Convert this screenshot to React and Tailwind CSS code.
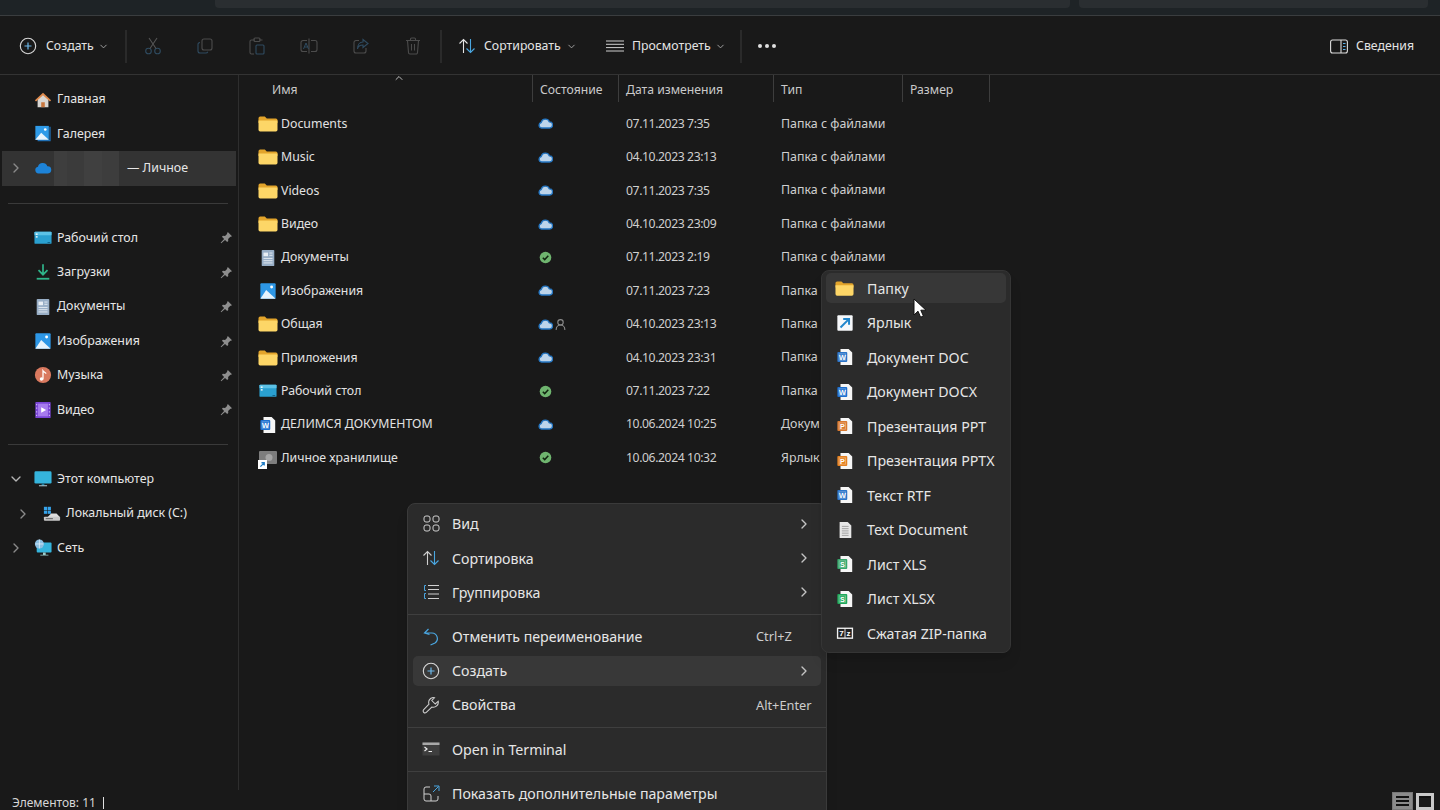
import React from 'react';
import { ChevronDown, ChevronRight, ChevronUp, UserRound } from 'lucide-react';

// --- цветные значки проводника ---
const Svg = ({ size = 18, className = '', children }) => (
  <svg width={size} height={size} viewBox="0 0 20 20" fill="none" className={`shrink-0 ${className}`}>{children}</svg>
);

const Folder = ({ size = 20 }) => (
  <Svg size={size}>
    <path d="M0.5 4.2A1.7 1.7 0 0 1 2.2 2.5h4.6l2 2h9a1.7 1.7 0 0 1 1.7 1.7V9H0.5z" fill="#e2a42b" />
    <path d="M0.5 6.6h19v9.2a1.7 1.7 0 0 1-1.7 1.7H2.2a1.7 1.7 0 0 1-1.7-1.7z" fill="#fdd667" />
  </Svg>
);
const HomeIcon = () => (
  <Svg>
    <path d="M4 9.5 10 4l6 5.5V18H4z" fill="#d9d6d2" />
    <path d="M8 12.5h4V18H8z" fill="#c8763e" />
    <path d="M1 10.4 10 2l9 8.4-1.3 1.3L10 4.7 2.3 11.7z" fill="#e08a4c" />
  </Svg>
);
const GalleryIcon = () => (
  <Svg>
    <path d="M17 2h1.5v16H4v-1.200h13z" fill="#1f6fb5" />
    <rect x="1.500" y="1" width="15" height="15.500" fill="#2f9be8" />
    <circle cx="12.500" cy="5" r="1.500" fill="#fff" />
    <path d="M1.500 16.500 8 8.500l8.500 8z" fill="#e9f4fc" />
  </Svg>
);
const PictureIcon = ({ size = 18 }) => (
  <Svg size={size}>
    <rect x="1.500" y="1.500" width="17" height="17" rx="1" fill="#2d97e6" />
    <circle cx="14" cy="5.500" r="1.600" fill="#fff" />
    <path d="M1.500 18.500 8 9l10.500 9.500z" fill="#e6f3fc" />
  </Svg>
);
const OneDriveIcon = () => (
  <Svg>
    <path d="M5 16a3.800 3.800 0 0 1-.6-7.500A5.500 5.500 0 0 1 14.800 8a4 4 0 0 1 .7 8z" fill="#1d83d8" />
  </Svg>
);
const DesktopIcon = ({ size = 18 }) => (
  <Svg size={size}>
    <rect x="0.500" y="3" width="19" height="13.500" rx="1" fill="#2aa0d0" />
    <rect x="0.500" y="3" width="19" height="4" rx="1" fill="#5cc2e6" />
    <rect x="2" y="5" width="2" height="1.500" fill="#fff" />
    <rect x="2" y="8" width="2" height="1.500" fill="#fff" />
    <rect x="15" y="14.500" width="3" height="1" fill="#0f5f85" />
  </Svg>
);
const DownloadIcon = () => (
  <Svg>
    <path d="M10 1.500v11M5 8l5 5 5-5" stroke="#2fb48a" strokeWidth="1.900" />
    <path d="M3 17.500h14" stroke="#2fb48a" strokeWidth="2" />
  </Svg>
);
const DocsIcon = ({ size = 18 }) => (
  <Svg size={size}>
    <rect x="3" y="1" width="14" height="18" rx="1" fill="#98aec6" />
    <rect x="5" y="4" width="5" height="4" fill="#e8eef4" />
    <path d="M11.500 4.500h3.500M11.500 7h3.500M5 10.500h10M5 13h10M5 15.500h10" stroke="#e8eef4" />
  </Svg>
);
const MusicIcon = () => (
  <Svg>
    <circle cx="10" cy="10" r="9" fill="#d9795f" />
    <path d="M10 15V5.500c1 1.500 2.500 1.500 3.500 3" stroke="#fff" strokeWidth="1.400" />
    <circle cx="8.300" cy="14.500" r="1.900" fill="#fff" />
  </Svg>
);
const VideoIcon = () => (
  <Svg>
    <rect x="1.500" y="1" width="17" height="18" rx="1" fill="#7a45d6" />
    <rect x="4.500" y="3" width="11" height="14" fill="#a77bee" />
    <path d="M2.500 4h1M2.500 8h1M2.500 12h1M2.500 16h1M16.500 4h1M16.500 8h1M16.500 12h1M16.500 16h1" stroke="#e4d6fb" strokeWidth="1.400" />
    <path d="M8 7l5.500 3L8 13z" fill="#fff" />
  </Svg>
);
const PcIcon = () => (
  <Svg>
    <rect x="0.500" y="1.500" width="19" height="13.500" rx="1.500" fill="#35b4dc" />
    <path d="M8.500 15h3v2.500h-3z" fill="#1d7d9e" />
    <path d="M5.500 17.500h9" stroke="#a9c3cd" strokeWidth="1.200" />
  </Svg>
);
const DriveIcon = () => (
  <Svg>
    <rect x="1" y="2" width="3.600" height="3.600" fill="#36a3ea" />
    <rect x="5.200" y="2" width="3.600" height="3.600" fill="#36a3ea" />
    <rect x="1" y="6.200" width="3.600" height="3.600" fill="#36a3ea" />
    <rect x="5.200" y="6.200" width="3.600" height="3.600" fill="#36a3ea" />
    <path d="M9 9.500h6l4 4H5z" fill="#dedede" />
    <rect x="1" y="13" width="18" height="4.500" rx="1" fill="#c9c9c9" />
    <path d="M3 15.200h8" stroke="#555" />
  </Svg>
);
const NetworkIcon = () => (
  <Svg>
    <rect x="3" y="4" width="16.500" height="11" rx="1" fill="#35b4dc" />
    <path d="M10 15h3v2.500h-3zM7 17.500h9v.8H7z" fill="#9cc" />
    <circle cx="6" cy="5.500" r="5" fill="#8bbfe2" />
    <path d="M1.500 5.500h9M6 .5v10" stroke="#e6f3fb" strokeWidth=".8" />
  </Svg>
);
const PinIcon = () => (
  <Svg size={13}>
    <path d="M12 1.500 18.500 8l-2 1-1 .2-3 3 .2 3.300-1.700 1.500-3.300-3.300L2 19l-1-1 5.300-5.700L3 9l1.500-1.700 3.300.2 3-3 .2-1z" fill="#8d8d8d" />
  </Svg>
);
const OfficeDoc = ({ color, letter, size = 18 }) => (
  <Svg size={size}>
    <path d="M5 1h9l4 4v14H5z" fill="#f6f6f6" />
    <rect x="1.500" y="4.500" width="11" height="11" rx="1" fill={color} />
    <rect x="3.500" y="6.500" width="7" height="7" fill="none" stroke="#fff" strokeOpacity=".35" />
    <text x="7" y="13" textAnchor="middle" fontSize="8" fontWeight="700" fill="#fff" fontFamily="Liberation Sans, sans-serif">{letter}</text>
  </Svg>
);
const ShortcutBox = () => (
  <Svg>
    <rect x="1.500" y="1.500" width="17" height="17" rx="1" fill="#f6f8fa" />
    <path d="M5 15 14 6M8 5.500h6.500V12" stroke="#2186cc" strokeWidth="2.200" />
  </Svg>
);
const TextDocIcon = () => (
  <Svg>
    <path d="M4 1h9l4 4v14H4z" fill="#e6e6e6" />
    <path d="M6.500 6h7.500M6.500 8.500h7.500M6.500 11h7.500M6.500 13.500h7.500M6.500 16h7.500" stroke="#9a9a9a" />
  </Svg>
);
const ZipIcon = () => (
  <Svg>
    <rect x="1" y="4" width="18" height="12.500" fill="#f2f2f2" />
    <rect x="2.500" y="5.500" width="7" height="9.500" fill="#222" />
    <rect x="10.500" y="5.500" width="7" height="9.500" fill="#222" />
    <text x="6" y="13.500" textAnchor="middle" fontSize="9" fontWeight="700" fill="#fff" fontFamily="Liberation Sans, sans-serif">7</text>
    <text x="14" y="13.500" textAnchor="middle" fontSize="9" fontWeight="700" fill="#fff" fontFamily="Liberation Sans, sans-serif">z</text>
  </Svg>
);
const VaultIcon = () => (
  <div className="relative w-[20px] h-[20px] shrink-0">
    <Svg size={20}>
      <rect x="1" y="3" width="18" height="13" rx="1" fill="#7d7d7d" />
      <circle cx="11" cy="9.500" r="3.500" fill="#a5a5a5" />
    </Svg>
    <div className="absolute left-0 bottom-[-1px] w-[9px] h-[9px] bg-white flex items-center justify-center">
      <svg width="7" height="7" viewBox="0 0 10 10" fill="none"><path d="M2 8 7 3M3.500 2.500H7.500V6.500" stroke="#1f7cc4" strokeWidth="1.800" /></svg>
    </div>
  </div>
);

// --- статусы синхронизации ---
const CloudStatus = () => (
  <svg width="15" height="11" viewBox="0 0 15 11" fill="none" className="shrink-0">
    <path d="M3.600 10a2.800 2.800 0 0 1-.4-5.500 4.300 4.300 0 0 1 8.200-.6 2.900 2.900 0 0 1 .2 6.100z" fill="#bcd4ea" stroke="#2576c2" strokeWidth="1.300" />
  </svg>
);
const SyncedStatus = () => (
  <svg width="13" height="13" viewBox="0 0 13 13" fill="none" className="shrink-0 ml-[1px]">
    <circle cx="6.500" cy="6.500" r="5.800" fill="#6fb56f" />
    <path d="M3.800 6.700 5.700 8.600 9.300 4.800" stroke="#10240f" strokeWidth="1.500" />
  </svg>
);

// --- значки панели команд ---
const PlusCircle = ({ size = 18 }) => (
  <svg width={size} height={size} viewBox="0 0 18 18" fill="none" className="shrink-0">
    <circle cx="9" cy="9" r="7.700" stroke="#d8d8d8" strokeWidth="1.100" />
    <path d="M9 5.500v7M5.500 9h7" stroke="#6db8ea" strokeWidth="1.200" />
  </svg>
);
const SortArrows = ({ dim = false }) => (
  <svg width="18" height="16" viewBox="0 0 18 16" fill="none" className="shrink-0">
    <path d="M5.500 15V1.500M1.500 5.500l4-4 4 4" stroke={dim ? '#cfcfcf' : '#e4e4e4'} strokeWidth="1.100" />
    <path d="M12.500 1v13.500M8.500 10.500l4 4 4-4" stroke="#4aa6e0" strokeWidth="1.100" />
  </svg>
);
const Scissors = () => (
  <svg width="16" height="18" viewBox="0 0 16 18" fill="none">
    <circle cx="3.500" cy="14" r="2.800" stroke="#2f4b60" strokeWidth="1.100" />
    <circle cx="12.500" cy="14" r="2.800" stroke="#2f4b60" strokeWidth="1.100" />
    <path d="M5 11.500 12 1M11 11.500 4 1" stroke="#555" strokeWidth="1.100" />
  </svg>
);
const CopyIcon = () => (
  <svg width="16" height="16" viewBox="0 0 16 16" fill="none">
    <rect x="5" y="1" width="10" height="11" rx="2" stroke="#4c4c4c" strokeWidth="1.100" />
    <path d="M3 4.500A2 2 0 0 0 1 6.500V13a2 2 0 0 0 2 2h6a2 2 0 0 0 1.800-1.200" stroke="#2f4b60" strokeWidth="1.100" />
  </svg>
);
const PasteIcon = () => (
  <svg width="16" height="18" viewBox="0 0 16 18" fill="none">
    <path d="M6 3H2.500A1.500 1.500 0 0 0 1 4.500v11A1.500 1.500 0 0 0 2.500 17H5M10 3h3.500" stroke="#4c4c4c" strokeWidth="1.100" />
    <rect x="5" y="1" width="6" height="3.500" rx="1" stroke="#4c4c4c" strokeWidth="1.100" />
    <rect x="7" y="8" width="8" height="9" rx="1" stroke="#2f4b60" strokeWidth="1.100" />
  </svg>
);
const RenameIcon = () => (
  <svg width="18" height="16" viewBox="0 0 18 16" fill="none">
    <path d="M7 2.500H3A2 2 0 0 0 1 4.500v7a2 2 0 0 0 2 2h4M11 2.500h4a2 2 0 0 1 2 2v7a2 2 0 0 1-2 2h-4M9 .5v15" stroke="#4c4c4c" strokeWidth="1.100" />
    <path d="M3.500 11 6 5l2.500 6M4.500 9h3" stroke="#2f4b60" strokeWidth="1" />
  </svg>
);
const ShareIcon = () => (
  <svg width="16" height="16" viewBox="0 0 16 16" fill="none">
    <path d="M6 2.500H3A2 2 0 0 0 1 4.500V13a2 2 0 0 0 2 2h8a2 2 0 0 0 2-2v-3" stroke="#4c4c4c" strokeWidth="1.100" />
    <path d="M10 1.500 15 5.500 10 9.500V7C7 7 5 8.500 4.500 11 4.500 7 6.500 4 10 4z" stroke="#2f4b60" strokeWidth="1.100" />
  </svg>
);
const TrashIcon = () => (
  <svg width="16" height="18" viewBox="0 0 16 18" fill="none">
    <path d="M1 3.500h14M5.500 3.500V2a1 1 0 0 1 1-1h3a1 1 0 0 1 1 1v1.500M2.500 3.500 3.500 15.500a1.500 1.500 0 0 0 1.500 1.500h6a1.500 1.500 0 0 0 1.500-1.500l1-12M6.500 7v6.500M9.500 7v6.500" stroke="#4c4c4c" strokeWidth="1.100" />
  </svg>
);
const ViewLines = () => (
  <svg width="18" height="12" viewBox="0 0 18 12" fill="none">
    <path d="M0 1h18M0 4.300h18M0 7.600h18M0 11h18" stroke="#cfcfcf" />
  </svg>
);
const DetailsIcon = () => (
  <svg width="18" height="15" viewBox="0 0 18 15" fill="none">
    <rect x=".6" y="1" width="16.800" height="13" rx="2" stroke="#dcdcdc" strokeWidth="1.100" />
    <path d="M11 1v13" stroke="#dcdcdc" strokeWidth="1.100" />
    <path d="M13 4.500h2.500M13 7.500h2.500M13 10.500h2.500" stroke="#5cb0e6" strokeWidth="1.100" />
  </svg>
);

// --- значки контекстного меню ---
const GridIcon = () => (
  <svg width="17" height="17" viewBox="0 0 17 17" fill="none">
    <rect x="1" y="1" width="6" height="6" rx="2" stroke="#cfcfcf" />
    <rect x="10" y="1" width="6" height="6" rx="2" stroke="#cfcfcf" />
    <rect x="1" y="10" width="6" height="6" rx="2" stroke="#cfcfcf" />
    <rect x="10" y="10" width="6" height="6" rx="2" stroke="#cfcfcf" />
  </svg>
);
const GroupIcon = () => (
  <svg width="16" height="16" viewBox="0 0 16 16" fill="none">
    <path d="M3 1.500H1.500v5H3M3 9.500H1.500v5H3" stroke="#4aa6e0" />
    <path d="M5 1.500h11M5 5.500h11M5 10h11M5 14.500h11" stroke="#d0d0d0" />
  </svg>
);
const UndoIcon = () => (
  <svg width="16" height="18" viewBox="0 0 16 18" fill="none">
    <path d="M5.500 1 1.500 5l5 1.500M1.500 5h7.500a5.500 5.500 0 0 1 3 10L7.500 17" stroke="#4aa6e0" strokeWidth="1.200" />
  </svg>
);
const WrenchIcon = () => (
  <svg width="18" height="18" viewBox="0 0 18 18" fill="none">
    <path d="M11 1.500a5 5 0 0 1 1.500.2L9.800 4.500l3.500 3.500 2.900-2.800A5 5 0 0 1 9.800 11L4.300 16.300a1.700 1.700 0 0 1-2.600-2.600L7 8.200A5 5 0 0 1 11 1.500z" stroke="#d0d0d0" strokeWidth="1.050" />
  </svg>
);
const TerminalIcon = () => (
  <svg width="18" height="14" viewBox="0 0 18 14" fill="none">
    <rect x="0.500" y="0.500" width="17" height="13" fill="#3e3e3e" />
    <rect x="0.500" y="0.500" width="17" height="2.500" fill="#a8a8a8" />
    <path d="M2.500 5 5 7 2.500 9M6.500 9.500h3.500" stroke="#eee" strokeWidth="1.200" />
  </svg>
);
const MoreParamsIcon = () => (
  <svg width="17" height="17" viewBox="0 0 17 17" fill="none">
    <path d="M7 2H3a2 2 0 0 0-2 2v10a2 2 0 0 0 2 2h10a2 2 0 0 0 2-2v-3M1 9h5a2 2 0 0 1 2 2v5" stroke="#d0d0d0" />
    <path d="M10 7l5.500-5.500M11 1h5v5" stroke="#4aa6e0" />
  </svg>
);

const sidebarGroups = [
  [
    { label: 'Главная', icon: <HomeIcon /> },
    { label: 'Галерея', icon: <GalleryIcon /> },
    { label: '— Личное', icon: <OneDriveIcon />, arrow: 'right', active: true, blurred: true },
  ],
  [
    { label: 'Рабочий стол', icon: <DesktopIcon />, pinned: true },
    { label: 'Загрузки', icon: <DownloadIcon />, pinned: true },
    { label: 'Документы', icon: <DocsIcon />, pinned: true },
    { label: 'Изображения', icon: <PictureIcon />, pinned: true },
    { label: 'Музыка', icon: <MusicIcon />, pinned: true },
    { label: 'Видео', icon: <VideoIcon />, pinned: true },
  ],
  [
    { label: 'Этот компьютер', icon: <PcIcon />, arrow: 'down' },
    { label: 'Локальный диск (C:)', icon: <DriveIcon />, arrow: 'right', nested: true },
    { label: 'Сеть', icon: <NetworkIcon />, arrow: 'right' },
  ],
];

// типы нижних строк обрезаны: остальное закрыто подменю
const files = [
  { name: 'Documents', icon: <Folder />, status: 'cloud', date: '07.11.2023 7:35', type: 'Папка с файлами' },
  { name: 'Music', icon: <Folder />, status: 'cloud', date: '04.10.2023 23:13', type: 'Папка с файлами' },
  { name: 'Videos', icon: <Folder />, status: 'cloud', date: '07.11.2023 7:35', type: 'Папка с файлами' },
  { name: 'Видео', icon: <Folder />, status: 'cloud', date: '04.10.2023 23:09', type: 'Папка с файлами' },
  { name: 'Документы', icon: <DocsIcon />, status: 'ok', date: '07.11.2023 2:19', type: 'Папка с файлами' },
  { name: 'Изображения', icon: <PictureIcon />, status: 'cloud', date: '07.11.2023 7:23', type: 'Папка' },
  { name: 'Общая', icon: <Folder />, status: 'cloud', shared: true, date: '04.10.2023 23:13', type: 'Папка' },
  { name: 'Приложения', icon: <Folder />, status: 'cloud', date: '04.10.2023 23:31', type: 'Папка' },
  { name: 'Рабочий стол', icon: <DesktopIcon />, status: 'ok', date: '07.11.2023 7:22', type: 'Папка' },
  { name: 'ДЕЛИМСЯ ДОКУМЕНТОМ', icon: <OfficeDoc color="#1c6fd0" letter="W" />, status: 'cloud', date: '10.06.2024 10:25', type: 'Докум' },
  { name: 'Личное хранилище', icon: <VaultIcon />, status: 'ok', date: '10.06.2024 10:32', type: 'Ярлык' },
];

const columns = [
  { label: 'Состояние', width: 'w-[86px]' },
  { label: 'Дата изменения', width: 'w-[155px]' },
  { label: 'Тип', width: 'w-[129px]' },
  { label: 'Размер', width: 'w-[87px]' },
];

const newItems = [
  { label: 'Папку', icon: <Folder size={19} />, hover: true },
  { label: 'Ярлык', icon: <ShortcutBox /> },
  { label: 'Документ DOC', icon: <OfficeDoc color="#2a74c9" letter="W" /> },
  { label: 'Документ DOCX', icon: <OfficeDoc color="#1c6fd0" letter="W" /> },
  { label: 'Презентация PPT', icon: <OfficeDoc color="#d9792f" letter="P" /> },
  { label: 'Презентация PPTX', icon: <OfficeDoc color="#e5801f" letter="P" /> },
  { label: 'Текст RTF', icon: <OfficeDoc color="#2a74c9" letter="W" /> },
  { label: 'Text Document', icon: <TextDocIcon /> },
  { label: 'Лист XLS', icon: <OfficeDoc color="#35a66a" letter="S" /> },
  { label: 'Лист XLSX', icon: <OfficeDoc color="#1fa85a" letter="S" /> },
  { label: 'Сжатая ZIP-папка', icon: <ZipIcon /> },
];

const Divider = () => <div className="w-[2px] h-[33px] bg-[#2a2a2a] shrink-0" />;

const ToolIcon = ({ children }) => (
  <div className="w-[52px] h-[34px] flex items-center justify-center shrink-0">{children}</div>
);

const Toolbar = () => (
  <div className="h-[59px] pt-[2px] border-b border-[#333333] flex items-center text-[12.300px] text-[#e4e4e4] shrink-0">
    <div className="w-[125px] pl-[19px] flex items-center shrink-0">
      <PlusCircle />
      <span className="ml-[9px]">Создать</span>
      <ChevronDown size={11} className="ml-[4px] text-[#a8a8a8]" />
    </div>
    <Divider />
    <ToolIcon><Scissors /></ToolIcon>
    <ToolIcon><CopyIcon /></ToolIcon>
    <ToolIcon><PasteIcon /></ToolIcon>
    <ToolIcon><RenameIcon /></ToolIcon>
    <ToolIcon><ShareIcon /></ToolIcon>
    <ToolIcon><TrashIcon /></ToolIcon>
    <div className="ml-[1px]"><Divider /></div>
    <div className="w-[162px] pl-[16px] flex items-center shrink-0">
      <SortArrows />
      <span className="ml-[8px]">Сортировать</span>
      <ChevronDown size={11} className="ml-[5px] text-[#a8a8a8]" />
    </div>
    <div className="w-[136px] flex items-center shrink-0 pl-[2px]">
      <ViewLines />
      <span className="ml-[8px]">Просмотреть</span>
      <ChevronDown size={11} className="ml-[4px] text-[#a8a8a8]" />
    </div>
    <Divider />
    <div className="ml-[16px] flex gap-[3px]">
      <span className="w-[4px] h-[4px] rounded-full bg-[#e0e0e0]" />
      <span className="w-[4px] h-[4px] rounded-full bg-[#e0e0e0]" />
      <span className="w-[4px] h-[4px] rounded-full bg-[#e0e0e0]" />
    </div>
    <div className="ml-auto pr-[26px] flex items-center">
      <DetailsIcon />
      <span className="ml-[8px]">Сведения</span>
    </div>
  </div>
);

const SidebarRow = ({ item }) => (
  <div className={`h-[34.4px] flex items-center mx-[2px] ${item.active ? 'bg-[#333333]' : ''}`}>
    <div className={`${item.nested ? 'w-[42px]' : 'w-[27px]'} flex justify-center shrink-0`}>
      {item.arrow === 'right' && <ChevronRight size={16} className="text-[#8a8a8a]" />}
      {item.arrow === 'down' && <ChevronDown size={16} className="text-[#b5b5b5]" />}
    </div>
    <div className={`${item.nested ? 'ml-[-1px]' : 'ml-[5px]'} w-[18px] flex justify-center shrink-0`}>{item.icon}</div>
    {item.blurred && (
      <div className="ml-[2px] w-[65px] h-full flex shrink-0">
        <div className="w-[13px] bg-[#3e3e3e]" />
        <div className="w-[17px] bg-[#3b3b3b]" />
        <div className="w-[18px] bg-[#404040]" />
        <div className="w-[17px] bg-[#3d3d3d]" />
      </div>
    )}
    <span className={`${item.blurred ? 'ml-[8px]' : 'ml-[5px]'} text-[12.400px] text-[#e6e6e6] whitespace-nowrap`}>{item.label}</span>
    {item.pinned && <span className="ml-auto mr-[3px]"><PinIcon /></span>}
  </div>
);

const Sidebar = () => (
  <aside className="w-[239px] h-full border-r border-[#2e2e2e] pt-[7.500px] shrink-0">
    {sidebarGroups.map((group, i) => (
      <div key={i}>
        {i > 0 && <div className="h-px bg-[#3a3a3a] my-[17px] ml-[8px] mr-[10px]" />}
        {group.map((item) => <SidebarRow key={item.label} item={item} />)}
      </div>
    ))}
  </aside>
);

const FileList = () => (
  <main className="flex-1 min-w-0">
    <div className="h-[27px] flex text-[12.200px] text-[#c9c9c9]">
      <div className="w-[294px] pl-[33px] pt-[4px] border-r border-[#3d3d3d] flex items-center relative shrink-0">
        Имя
        <ChevronUp size={12} className="absolute left-[154px] top-[-3px] text-[#bdbdbd]" />
      </div>
      {columns.map((col) => (
        <div key={col.label} className={`${col.width} pl-[7px] pt-[4px] border-r border-[#3d3d3d] flex items-center shrink-0`}>{col.label}</div>
      ))}
    </div>
    <div className="mt-[5.300px]">
      {files.map((file) => (
        <div key={file.name} className="h-[33.4px] flex items-center text-[12.300px] text-[#e2e2e2]">
          <div className="w-[294px] pl-[19px] flex items-center shrink-0">
            <div className="w-[20px] flex justify-center shrink-0">{file.icon}</div>
            <span className="ml-[3px] whitespace-nowrap">{file.name}</span>
          </div>
          <div className="w-[86px] pl-[5px] flex items-center gap-[1px] shrink-0">
            {file.status === 'cloud' ? <CloudStatus /> : <SyncedStatus />}
            {file.shared && <UserRound size={13} className="text-[#8f8f8f]" />}
          </div>
          <div className="w-[155px] pl-[7px] text-[12.200px] tracking-[-0.4px] text-[#cfcfcf] shrink-0">{file.date}</div>
          <div className="ml-[7px] text-[12.400px] text-[#cfcfcf] whitespace-nowrap">{file.type}</div>
        </div>
      ))}
    </div>
  </main>
);

const MenuRow = ({ icon, label, shortcut, arrow, hover }) => (
  <div className={`h-[30px] my-[2.100px] mx-[5px] rounded-[5px] flex items-center shrink-0 ${hover ? 'bg-[#383838]' : ''}`}>
    <div className="w-[36px] flex justify-center shrink-0">{icon}</div>
    <span className="ml-[3px]">{label}</span>
    {shortcut && <span className="absolute left-[348px] text-[12.800px] text-[#cdcdcd]">{shortcut}</span>}
    {arrow && <ChevronRight size={16} className="ml-auto mr-[9px] text-[#c4c4c4]" />}
  </div>
);

const MenuLine = () => <div className="h-px bg-[#3f3f3f] my-[4.600px] shrink-0" />;

const ContextMenu = () => (
  <div className="absolute left-[407px] top-[503px] w-[420px] h-[330px] pt-[2.900px] flex flex-col bg-[#2b2b2b] border border-[#3a3a3a] rounded-[8px] text-[14.200px] text-[#e6e6e6] font-['Noto_Sans',sans-serif] shadow-lg">
    <MenuRow icon={<GridIcon />} label="Вид" arrow />
    <MenuRow icon={<SortArrows dim />} label="Сортировка" arrow />
    <MenuRow icon={<GroupIcon />} label="Группировка" arrow />
    <MenuLine />
    <MenuRow icon={<UndoIcon />} label="Отменить переименование" shortcut="Ctrl+Z" />
    <MenuRow icon={<PlusCircle />} label="Создать" arrow hover />
    <MenuRow icon={<WrenchIcon />} label="Свойства" shortcut="Alt+Enter" />
    <MenuLine />
    <MenuRow icon={<TerminalIcon />} label="Open in Terminal" />
    <MenuLine />
    <MenuRow icon={<MoreParamsIcon />} label="Показать дополнительные параметры" />
  </div>
);

const NewSubmenu = () => (
  <div className="absolute left-[821px] top-[270px] w-[190px] h-[383px] flex flex-col bg-[#2b2b2b] border border-[#353535] rounded-[8px] text-[14.200px] text-[#e6e6e6] font-['Noto_Sans',sans-serif] shadow-lg">
    {newItems.map((item) => (
      <div key={item.label} className={`h-[30px] my-[2.250px] mx-[4px] rounded-[5px] flex items-center shrink-0 ${item.hover ? 'bg-[#373737]' : ''}`}>
        <div className="w-[37px] flex justify-center shrink-0">{item.icon}</div>
        <span className="ml-[4px] whitespace-nowrap">{item.label}</span>
      </div>
    ))}
  </div>
);

const Cursor = () => (
  <svg width="14" height="21" viewBox="0 0 14 21" className="absolute left-[913px] top-[298px]">
    <path d="M1 1v16l4-3.800 2.600 6 2.800-1.200-2.600-5.800H13z" fill="#fff" stroke="#111" strokeWidth="1" />
  </svg>
);

const App = () => (
  <div className="relative w-[1440px] h-[810px] overflow-hidden bg-[#191919] flex flex-col font-['Noto_Sans',sans-serif]">
    <div className="h-[16px] bg-[#1e2326] border-b border-[#3a3d3f] flex items-start shrink-0">
      <div className="ml-[215px] w-[855px] h-[8px] bg-[#2a2e31] rounded-b-[4px]" />
      <div className="ml-[9px] w-[349px] h-[8px] bg-[#2a2e31] rounded-b-[4px]" />
    </div>
    <Toolbar />
    <div className="flex-1 flex min-h-0">
      <Sidebar />
      <FileList />
    </div>
    <div className="h-[20px] flex items-center justify-between shrink-0 text-[12px] text-[#d6d6d6] pl-[12px]">
      <div className="flex items-center pt-[5px]">
        Элементов: 11
        <span className="ml-[7px] w-px h-[12px] bg-[#e0e0e0]" />
      </div>
      <div className="flex items-end h-full pr-[6px] gap-[3px]">
        <div className="w-[21px] h-[18px] bg-[#8a8a8a] border border-[#777] flex flex-col items-center justify-center gap-[2px] px-[3px]">
          <span className="w-full h-[2px] bg-[#111]" />
          <span className="w-full h-[2px] bg-[#111]" />
          <span className="w-full h-[2px] bg-[#111]" />
        </div>
        <div className="w-[18px] h-[17px] bg-[#c9c9c9] p-[3px]">
          <div className="w-full h-full bg-[#1a1a1a] border-t-[2px] border-[#111]" />
        </div>
      </div>
    </div>
    <ContextMenu />
    <NewSubmenu />
    <Cursor />
  </div>
);

export default App;
